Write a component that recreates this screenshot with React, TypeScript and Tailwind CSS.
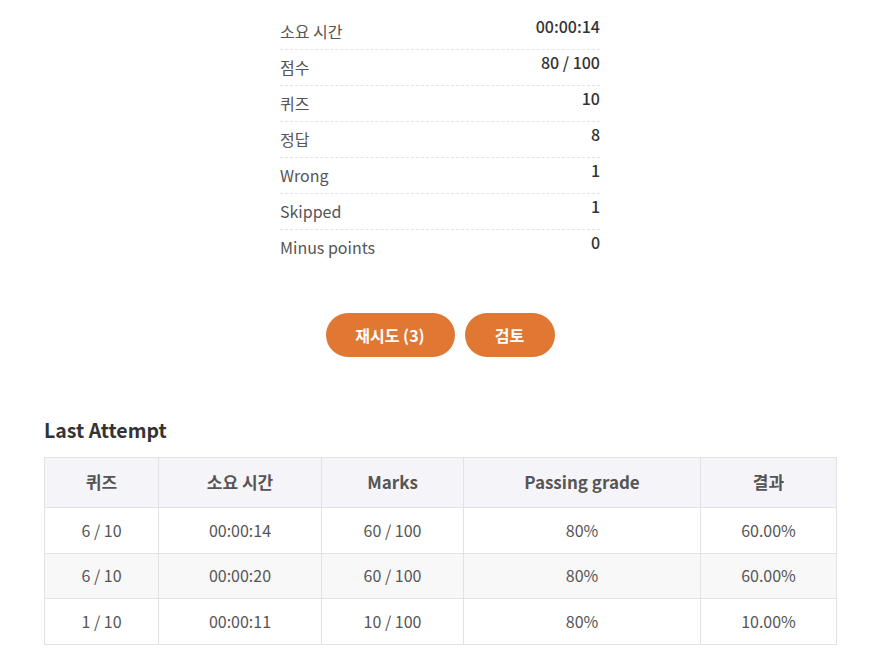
const summary = [
  { label: "소요 시간", value: "00:00:14" },
  { label: "점수", value: "80 / 100" },
  { label: "퀴즈", value: "10" },
  { label: "정답", value: "8" },
  { label: "Wrong", value: "1" },
  { label: "Skipped", value: "1" },
  { label: "Minus points", value: "0" },
];

const attempts = [
  ["6 / 10", "00:00:14", "60 / 100", "80%", "60.00%"],
  ["6 / 10", "00:00:20", "60 / 100", "80%", "60.00%"],
  ["1 / 10", "00:00:11", "10 / 100", "80%", "10.00%"],
];

const headers = ["퀴즈", "소요 시간", "Marks", "Passing grade", "결과"];
const widths = ["w-[114px]", "w-[163px]", "w-[142px]", "w-[237px]", "w-[136px]"];

export default function App() {
  return (
    <div className="min-h-[672px] bg-white pl-[44px] pt-[14px] font-['Noto_Sans_CJK_KR','Noto_Sans',sans-serif] text-[#555]">
      <div className="w-[792px]">
        <ul className="mx-auto w-[320px]">
          {summary.map((row, i) => (
            <li
              key={row.label}
              className={`flex h-[36px] justify-between ${i < summary.length - 1 ? "border-b border-dashed border-[#e4e4e4]" : ""}`}
            >
              <span className="pt-[7px] text-[16px] leading-[20px] text-[#555]">{row.label}</span>
              <span className="pt-[2px] text-[16px] font-medium leading-[20px] text-[#333]">{row.value}</span>
            </li>
          ))}
        </ul>

        <div className="mt-[47px] flex justify-center gap-[10px]">
          <button className="h-[44px] w-[129px] rounded-full bg-[#e07833] text-[16px] font-bold text-white">
            재시도 (3)
          </button>
          <button className="h-[44px] w-[90px] rounded-full bg-[#e07833] text-[16px] font-bold text-white">
            검토
          </button>
        </div>

        <h3 className="mt-[59px] text-[19.5px] font-bold leading-[28px] text-[#333]">Last Attempt</h3>

        <table className="mt-[13px] w-[792px] table-fixed border-collapse text-center">
          <thead>
            <tr className="h-[50px] bg-[#f5f5f9]">
              {headers.map((h, i) => (
                <th key={h} className={`${widths[i]} border border-[#e2e2e2] pb-[2px] text-[17px] font-bold text-[#555]`}>
                  {h}
                </th>
              ))}
            </tr>
          </thead>
          <tbody>
            {attempts.map((row, r) => (
              <tr key={r} className={`h-[45.5px] ${r === 1 ? "bg-[#f8f8f8]" : "bg-white"}`}>
                {row.map((cell, c) => (
                  <td key={c} className="border border-[#e2e2e2] pb-[1px] text-[16px] text-[#555]">
                    {cell}
                  </td>
                ))}
              </tr>
            ))}
          </tbody>
        </table>
      </div>
    </div>
  );
}
